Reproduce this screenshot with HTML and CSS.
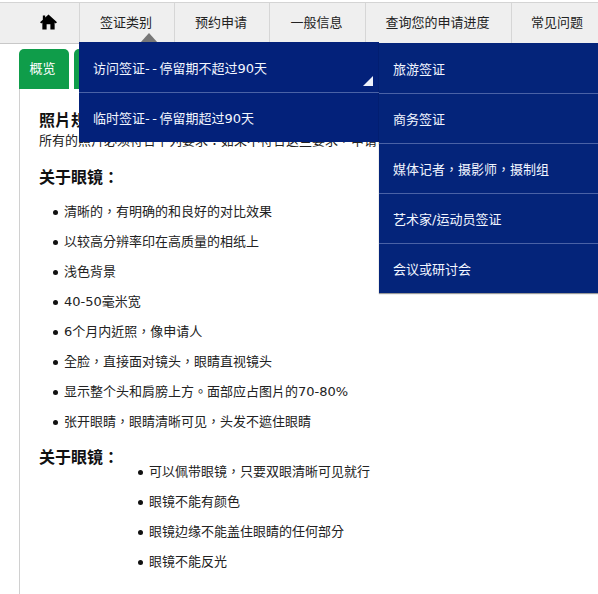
FILE: index.html
```html
<!DOCTYPE html>
<html lang="zh-TW">
<head>
    <meta charset="UTF-8">
    <meta name="viewport" content="width=device-width, initial-scale=1.0">
    <title>照片规格要求</title>
    <link rel="stylesheet" href="styles.css">
</head>
<body>
    <nav class="main-nav">
        <a class="nav-item home">
            <svg class="home-icon" viewBox="0 0 18 16" width="17" height="16">
                <path d="M9 0 L18 8.2 L16.6 9.6 L15.5 8.6 V16 H11 V10.5 H7 V16 H2.5 V8.6 L1.4 9.6 L0 8.2 L3 5.5 V1 H5.5 V3.2 Z" fill="#000"/>
            </svg>
        </a>
        <a class="nav-item visa">签证类别</a>
        <a class="nav-item booking">预约申请</a>
        <a class="nav-item info">一般信息</a>
        <a class="nav-item status">查询您的申请进度</a>
        <a class="nav-item faq">常见问题</a>

        <div class="nav-caret"></div>

        <ul class="dropdown dropdown-main">
            <li class="has-sub"><span>访问签证<span class="dash">--</span>停留期不超过90天</span></li>
            <li><span>临时签证<span class="dash">--</span>停留期超过90天</span></li>
        </ul>
        <ul class="dropdown dropdown-sub">
            <li>旅游签证</li>
            <li>商务签证</li>
            <li>媒体记者，摄影师，摄制组</li>
            <li>艺术家/运动员签证</li>
            <li>会议或研讨会</li>
        </ul>
    </nav>

    <div class="tabs">
        <a class="tab">概览</a>
        <a class="tab">要求</a>
    </div>

    <main class="tab-content">
        <h3 class="spec-title">照片规格要求</h3>
        <p class="spec-intro">所有的照片必须符合下列要求：如果不符合这些要求，申请可能会被延误或者拒绝</p>

        <h3 class="section-title">关于眼镜：</h3>
        <ul class="req-list">
            <li>清晰的，有明确的和良好的对比效果</li>
            <li>以较高分辨率印在高质量的相纸上</li>
            <li>浅色背景</li>
            <li>40-50毫米宽</li>
            <li>6个月内近照，像申请人</li>
            <li>全脸，直接面对镜头，眼睛直视镜头</li>
            <li>显示整个头和肩膀上方。面部应占图片的70-80%</li>
            <li>张开眼睛，眼睛清晰可见，头发不遮住眼睛</li>
        </ul>

        <div class="glasses">
            <h3 class="section-title">关于眼镜：</h3>
            <ul class="req-list">
                <li>可以佩带眼镜，只要双眼清晰可见就行</li>
                <li>眼镜不能有颜色</li>
                <li>眼镜边缘不能盖住眼睛的任何部分</li>
                <li>眼镜不能反光</li>
            </ul>
        </div>
    </main>
</body>
</html>
```

FILE: styles.css
```css
html, body {
    margin: 0;
    height: 594px;
    overflow: hidden;
}
body {
    font-family: "DejaVu Sans", "Noto Sans CJK TC", sans-serif;
    font-size: 13px;
    color: #222;
    background: white;
}
.main-nav {
    position: relative;
    display: flex;
    height: 40px;
    margin-top: 2px;
    background: #efefef;
    border-top: 1px solid #d4d4d4;
    border-bottom: 1px solid #c8c8c8;
}
.nav-item {
    display: flex;
    align-items: center;
    justify-content: center;
    padding: 0 2px 3px 0;
    border-right: 1px solid #d6d6d6;
    color: #222;
    box-sizing: border-box;
}
.home {
    width: 80px;
    padding-left: 20px;
}
.visa { width: 95px; }
.booking { width: 95px; }
.info { width: 96px; }
.status { width: 146px; }
.faq { width: 86px; padding: 0 0 3px 4px; border-right: none; }
.nav-caret {
    position: absolute;
    left: 140px;
    top: 30px;
    width: 0;
    height: 0;
    border-left: 9px solid transparent;
    border-right: 9px solid transparent;
    border-bottom: 10px solid #777;
}
.dropdown {
    position: absolute;
    margin: 0;
    padding: 1px 0 0 0;
    list-style: none;
    color: #f2f6ff;
    z-index: 5;
}
.dropdown li {
    display: flex;
    align-items: center;
    height: 50px;
    padding-left: 14px;
    border-bottom: 1px solid #4a62a6;
    box-sizing: border-box;
}
.dropdown li:last-child {
    border-bottom: none;
    height: 49px;
}
.dash {
    letter-spacing: 2.5px;
}
.dropdown-main {
    left: 79px;
    top: 39px;
    width: 300px;
    background: #03217a;
}
.dropdown-sub {
    left: 379px;
    top: 40px;
    width: 219px;
    background: #04247a;
    box-shadow: 0 1px 1px rgba(0,0,0,0.4);
}
.has-sub {
    position: relative;
}
.has-sub::after {
    content: "";
    position: absolute;
    right: 6px;
    bottom: 6px;
    width: 0;
    height: 0;
    border-left: 10px solid transparent;
    border-bottom: 10px solid #eef2fb;
}
.tabs {
    display: flex;
    gap: 5px;
    margin: 5px 0 0 19px;
}
.tab {
    display: flex;
    align-items: center;
    justify-content: center;
    width: 50px;
    height: 40px;
    padding: 0 3px 3px 0;
    box-sizing: border-box;
    background: #0f9d4a;
    color: white;
    border-radius: 5px 5px 0 0;
}
.tab-content {
    margin-left: 19px;
    padding: 21px 0 0 19px;
    border-left: 1px solid #d0d0d0;
    height: 505px;
    box-sizing: border-box;
}
.spec-title {
    margin: 0;
    font-size: 16px;
    line-height: 22px;
    color: #111;
}
.spec-intro {
    margin: 0 0 17px 0;
    line-height: 18px;
    white-space: nowrap;
}
.section-title {
    margin: 0;
    font-size: 16px;
    line-height: 22px;
    color: #111;
}
.req-list {
    margin: 8px 0 10px 0;
    padding: 0 0 0 14px;
    list-style: none;
}
.req-list li {
    display: flex;
    align-items: center;
    gap: 6px;
    height: 30px;
    line-height: 30px;
}
.req-list li::before {
    content: "";
    width: 5px;
    height: 5px;
    border-radius: 50%;
    background: #111;
    flex-shrink: 0;
}
.glasses {
    display: flex;
}
.glasses .section-title {
    width: 70px;
    flex-shrink: 0;
    white-space: nowrap;
}
.glasses .req-list {
    margin: 10px 0 0 0;
    padding-left: 29px;
}
```
